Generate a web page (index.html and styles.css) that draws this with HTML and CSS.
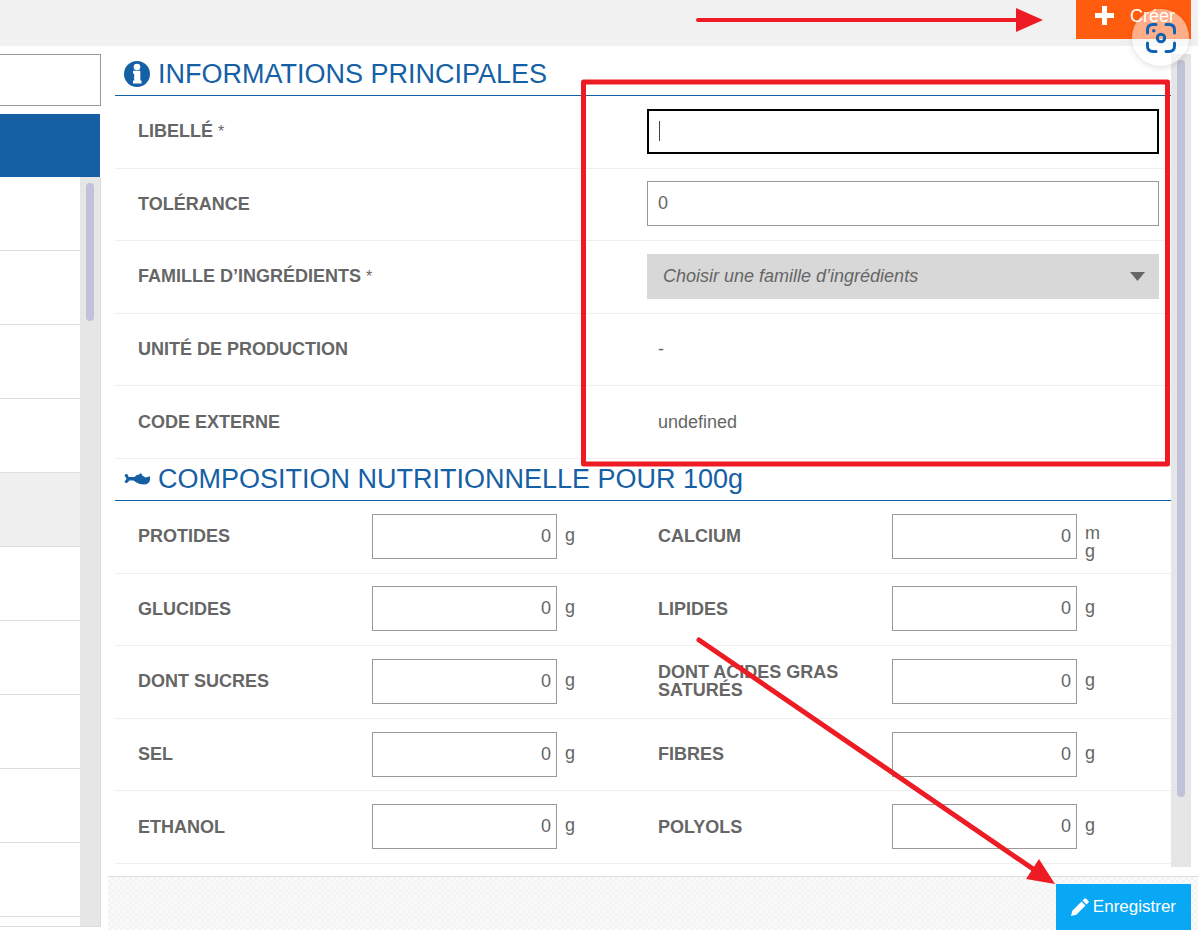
FILE: index.html
```
<!doctype html>
<html lang="fr">
<head>
	<meta charset="utf-8">
	<title>Ingrédients</title>
	<link rel="stylesheet" href="styles.css">
</head>
<body>
	<header class="topbar">
		<button type="button" class="btn btn-create">
			<svg width="19" height="19" viewBox="0 0 19 19"><path d="M7 0h5v7h7v5h-7v7H7v-7H0V7h7z" fill="#fff"/></svg>
			Créer
		</button>
	</header>

	<div class="page">
		<!-- Ingredient list -->
		<aside class="sidebar">
			<input type="text" class="search" aria-label="Rechercher">
			<div class="list-head"></div>
			<div class="list-wrap">
				<ul class="list">
					<li></li>
					<li></li>
					<li></li>
					<li></li>
					<li class="selected"></li>
					<li></li>
					<li></li>
					<li></li>
					<li></li>
					<li></li>
					<li></li>
				</ul>
				<div class="scrollbar"><div class="thumb thumb-list"></div></div>
			</div>
		</aside>

		<form class="main">
			<div class="detail">
				<div class="content">
					<h2>
						<svg class="icon" width="26" height="26" viewBox="0 0 26 26"><circle cx="13" cy="13" r="13" fill="#1560a5"/><circle cx="13" cy="6" r="3.300" fill="#fff"/><path d="M9 9.800h7.300v9.700H17.500V22.500H9v-3h1.200v-6.700H9z" fill="#fff"/></svg>
						INFORMATIONS PRINCIPALES
					</h2>
					<div class="fields">
						<div class="row">
							<label class="label" for="libelle">LIBELLÉ <span class="star">*</span></label>
							<input type="text" id="libelle" class="field active">
						</div>
						<div class="row">
							<label class="label" for="tolerance">TOLÉRANCE</label>
							<input type="text" id="tolerance" class="field" value="0">
						</div>
						<div class="row">
							<label class="label" for="famille">FAMILLE D’INGRÉDIENTS <span class="star">*</span></label>
							<div class="select">
								<select id="famille"><option>Choisir une famille d’ingrédients</option></select>
								<svg class="caret" width="15" height="9" viewBox="0 0 15 9"><path d="M0 0h15L7.500 9z" fill="#666"/></svg>
							</div>
						</div>
						<div class="row">
							<span class="label">UNITÉ DE PRODUCTION</span>
							<span class="value">-</span>
						</div>
						<div class="row">
							<span class="label">CODE EXTERNE</span>
							<span class="value">undefined</span>
						</div>
					</div>

					<h2>
						<svg class="icon" width="26" height="12" viewBox="0 0 26 12"><path d="M.5 2.800Q1 .2 3.200 1.200 4.500 2 4.500 4H10.500Q12 1.500 15 1.500L17 0 18.500 2.800 21.500 4.500 26 3.300V7Q25 11.300 20 11.500 15.500 11.500 12 9.300L9.500 7.500H5Q4.500 9.300 3.200 9.800 1 10.500.5 8.500L2.300 6.200 2.300 5Z" fill="#1560a5"/></svg>
						COMPOSITION NUTRITIONNELLE POUR 100g
					</h2>
					<div class="fields">
						<div class="row">
							<div class="cell"><label class="label" for="protides">PROTIDES</label><input type="text" id="protides" class="field number" value="0"><span class="unit">g</span></div>
							<div class="cell"><label class="label" for="calcium">CALCIUM</label><input type="text" id="calcium" class="field number" value="0"><span class="unit">mg</span></div>
						</div>
						<div class="row">
							<div class="cell"><label class="label" for="glucides">GLUCIDES</label><input type="text" id="glucides" class="field number" value="0"><span class="unit">g</span></div>
							<div class="cell"><label class="label" for="lipides">LIPIDES</label><input type="text" id="lipides" class="field number" value="0"><span class="unit">g</span></div>
						</div>
						<div class="row">
							<div class="cell"><label class="label" for="sucres">DONT SUCRES</label><input type="text" id="sucres" class="field number" value="0"><span class="unit">g</span></div>
							<div class="cell"><label class="label" for="agsatures">DONT ACIDES GRAS SATURÉS</label><input type="text" id="agsatures" class="field number" value="0"><span class="unit">g</span></div>
						</div>
						<div class="row">
							<div class="cell"><label class="label" for="sel">SEL</label><input type="text" id="sel" class="field number" value="0"><span class="unit">g</span></div>
							<div class="cell"><label class="label" for="fibres">FIBRES</label><input type="text" id="fibres" class="field number" value="0"><span class="unit">g</span></div>
						</div>
						<div class="row">
							<div class="cell"><label class="label" for="ethanol">ETHANOL</label><input type="text" id="ethanol" class="field number" value="0"><span class="unit">g</span></div>
							<div class="cell"><label class="label" for="polyols">POLYOLS</label><input type="text" id="polyols" class="field number" value="0"><span class="unit">g</span></div>
						</div>
					</div>
				</div>
				<div class="scrollbar"><div class="thumb thumb-detail"></div></div>
			</div>

			<div class="actions">
				<button type="submit" class="btn btn-save">
					<svg width="18" height="18" viewBox="0 0 18 18"><path d="M0 18l1.300-5.300L10.500 3.500l4 4-9.200 9.200zM11.500 2.500L13.300.7q1-1 2 0l2 2q1 1 0 2L15.500 6.500z" fill="#fff"/></svg>
					Enregistrer
				</button>
			</div>
		</form>
	</div>

	<button type="button" class="lens" aria-label="Recherche visuelle">
		<svg width="30" height="30" viewBox="0 0 30 30" fill="none" stroke="#0f62b4" stroke-width="3" stroke-linecap="round"><path d="M1.500 10V7Q1.500 1.500 7 1.500h3M20 1.500H23Q28.500 1.500 28.500 7v3M28.500 20V23Q28.500 28.500 23 28.500h-3M10 28.500H7Q1.500 28.500 1.500 23v-3"/><circle cx="15" cy="15" r="3.700"/><circle cx="7.800" cy="7.800" r="1.700" fill="#0f62b4" stroke="none"/></svg>
	</button>

	<!-- Red marks over the screen -->
	<svg class="marks" fill="none" stroke="#ed1c24">
		<path d="M698 20H1018" stroke-width="4" stroke-linecap="round"/>
		<path d="M1016 8v24l27-12z" fill="#ed1c24" stroke="none"/>
		<rect x="583.500" y="82" width="584" height="382" stroke-width="5" stroke-linejoin="round"/>
		<path d="M699 640L1036 871" stroke-width="5" stroke-linecap="round"/>
		<path d="M1039 859l16 25-29-5z" fill="#ed1c24" stroke="none"/>
	</svg>
</body>
</html>
```
FILE: styles.css
```
* { box-sizing: border-box; }

body {
  margin: 0;
  height: 100vh;
  display: flex;
  flex-direction: column;
  overflow: hidden;
  background: #fff;
  color: #666;
  font: 18px/18px "Liberation Sans", Arial, sans-serif;
}

input, select, button {
  font: inherit;
  color: inherit;
}

.topbar {
  flex: none;
  display: flex;
  justify-content: flex-end;
  align-items: flex-start;
  height: 46px;
  padding-right: 7px;
  background: #f1f1f1;
}

.btn {
  display: flex;
  align-items: center;
  border: 0;
  color: #fff;
}

.btn-create {
  gap: 16px;
  height: 39px;
  padding: 0 16px 8px 19px;
  background: #ff5c10;
}

.page {
  flex: 1;
  display: flex;
  gap: 7px;
  min-height: 0;
  padding-top: 8px;
}

/* Left list */
.sidebar {
  flex: none;
  display: flex;
  flex-direction: column;
  width: 101px;
  padding-bottom: 3px;
}

.search {
  width: 100%;
  height: 52px;
  border: 1px solid #999;
  border-left: 0;
}

.list-head {
  flex: none;
  height: 63px;
  margin: 8px 1px 0 0;
  background: #1560a5;
}

.list-wrap {
  flex: 1;
  display: flex;
  min-height: 0;
  border-right: 1px solid #ddd;
  border-bottom: 1px solid #ddd;
}

.list {
  flex: 1;
  margin: 0;
  padding: 0;
  list-style: none;
  overflow: hidden;
}

.list li {
  height: 74px;
  border-bottom: 1px solid #ddd;
}

.list .selected { background: #f0f0f0; }

.scrollbar {
  flex: none;
  width: 20px;
  padding: 6px;
  background: #e6e6e6;
}

.thumb {
  border-radius: 4px;
  background: #bfc2d8;
}

.thumb-list { height: 138px; }
.thumb-detail { height: 92%; }

/* Detail form */
.main {
  flex: 1;
  display: flex;
  flex-direction: column;
  min-width: 0;
}

.detail {
  flex: 1;
  display: flex;
  min-height: 0;
  padding: 0 7px 9px 7px;
}

.content {
  flex: 1;
  min-width: 0;
}

h2 {
  display: flex;
  align-items: center;
  gap: 8px;
  height: 42px;
  margin: 0;
  padding: 0 0 1px 9px;
  border-bottom: 1px solid #1560a5;
  color: #1560a5;
  font-size: 27px;
  font-weight: normal;
  line-height: 32px;
}

.icon { flex: none; }

.fields {
  display: grid;
  grid-auto-rows: 1fr;
  min-height: 363px;
}

.row {
  display: grid;
  grid-template-columns: 1fr 1fr;
  align-items: center;
  padding: 0 4px 1px 12px;
  border-bottom: 1px solid #eee;
}

.cell {
  display: grid;
  grid-template-columns: 245fr 185fr 90fr;
  align-items: center;
}

.label {
  padding: 0 11px;
  font-weight: bold;
}

.star {
  font-size: 16px;
  font-weight: normal;
}

.value { padding-left: 11px; }

.field {
  width: 100%;
  height: 45px;
  padding: 0 10px;
  border: 1px solid #999;
  background: #fff;
}

.row > .field,
.select {
  width: auto;
  margin-right: 8px;
}

.active {
  border: 2px solid #000;
  background: #fff linear-gradient(#444, #444) 10px center / 1px 20px no-repeat;
}

.number {
  padding: 0 5px;
  text-align: right;
}

.unit {
  align-self: start;
  width: 24px;
  margin-top: 12px;
  padding-left: 8px;
  word-break: break-all;
}

.select { position: relative; }

.select select {
  display: block;
  width: 100%;
  height: 45px;
  padding: 0 40px 0 16px;
  border: 0;
  border-radius: 0;
  appearance: none;
  background: #d8d8d8;
  font-style: italic;
  line-height: 24px;
}

.caret {
  position: absolute;
  top: 18px;
  right: 14px;
  pointer-events: none;
}

.actions {
  flex: none;
  display: flex;
  justify-content: flex-end;
  padding: 7px 7px 0 0;
  border-top: 1px solid #ddd;
  background: repeating-conic-gradient(#f4f4f4 0 25%, #fafafa 0 50%) 0 0 / 6px 6px;
}

.btn-save {
  gap: 4px;
  height: 46px;
  padding: 0 15px;
  background: #09a8f4;
  font-size: 17px;
}

.lens {
  position: absolute;
  top: 9px;
  right: 9px;
  display: flex;
  align-items: center;
  justify-content: center;
  width: 57px;
  height: 57px;
  padding: 0;
  border: 0;
  border-radius: 50%;
  background: rgba(255, 255, 255, .5);
  box-shadow: 0 2px 6px rgba(0, 0, 0, .12);
}

.marks {
  position: absolute;
  top: 0;
  left: 0;
  width: 100%;
  height: 100%;
  pointer-events: none;
}
```
